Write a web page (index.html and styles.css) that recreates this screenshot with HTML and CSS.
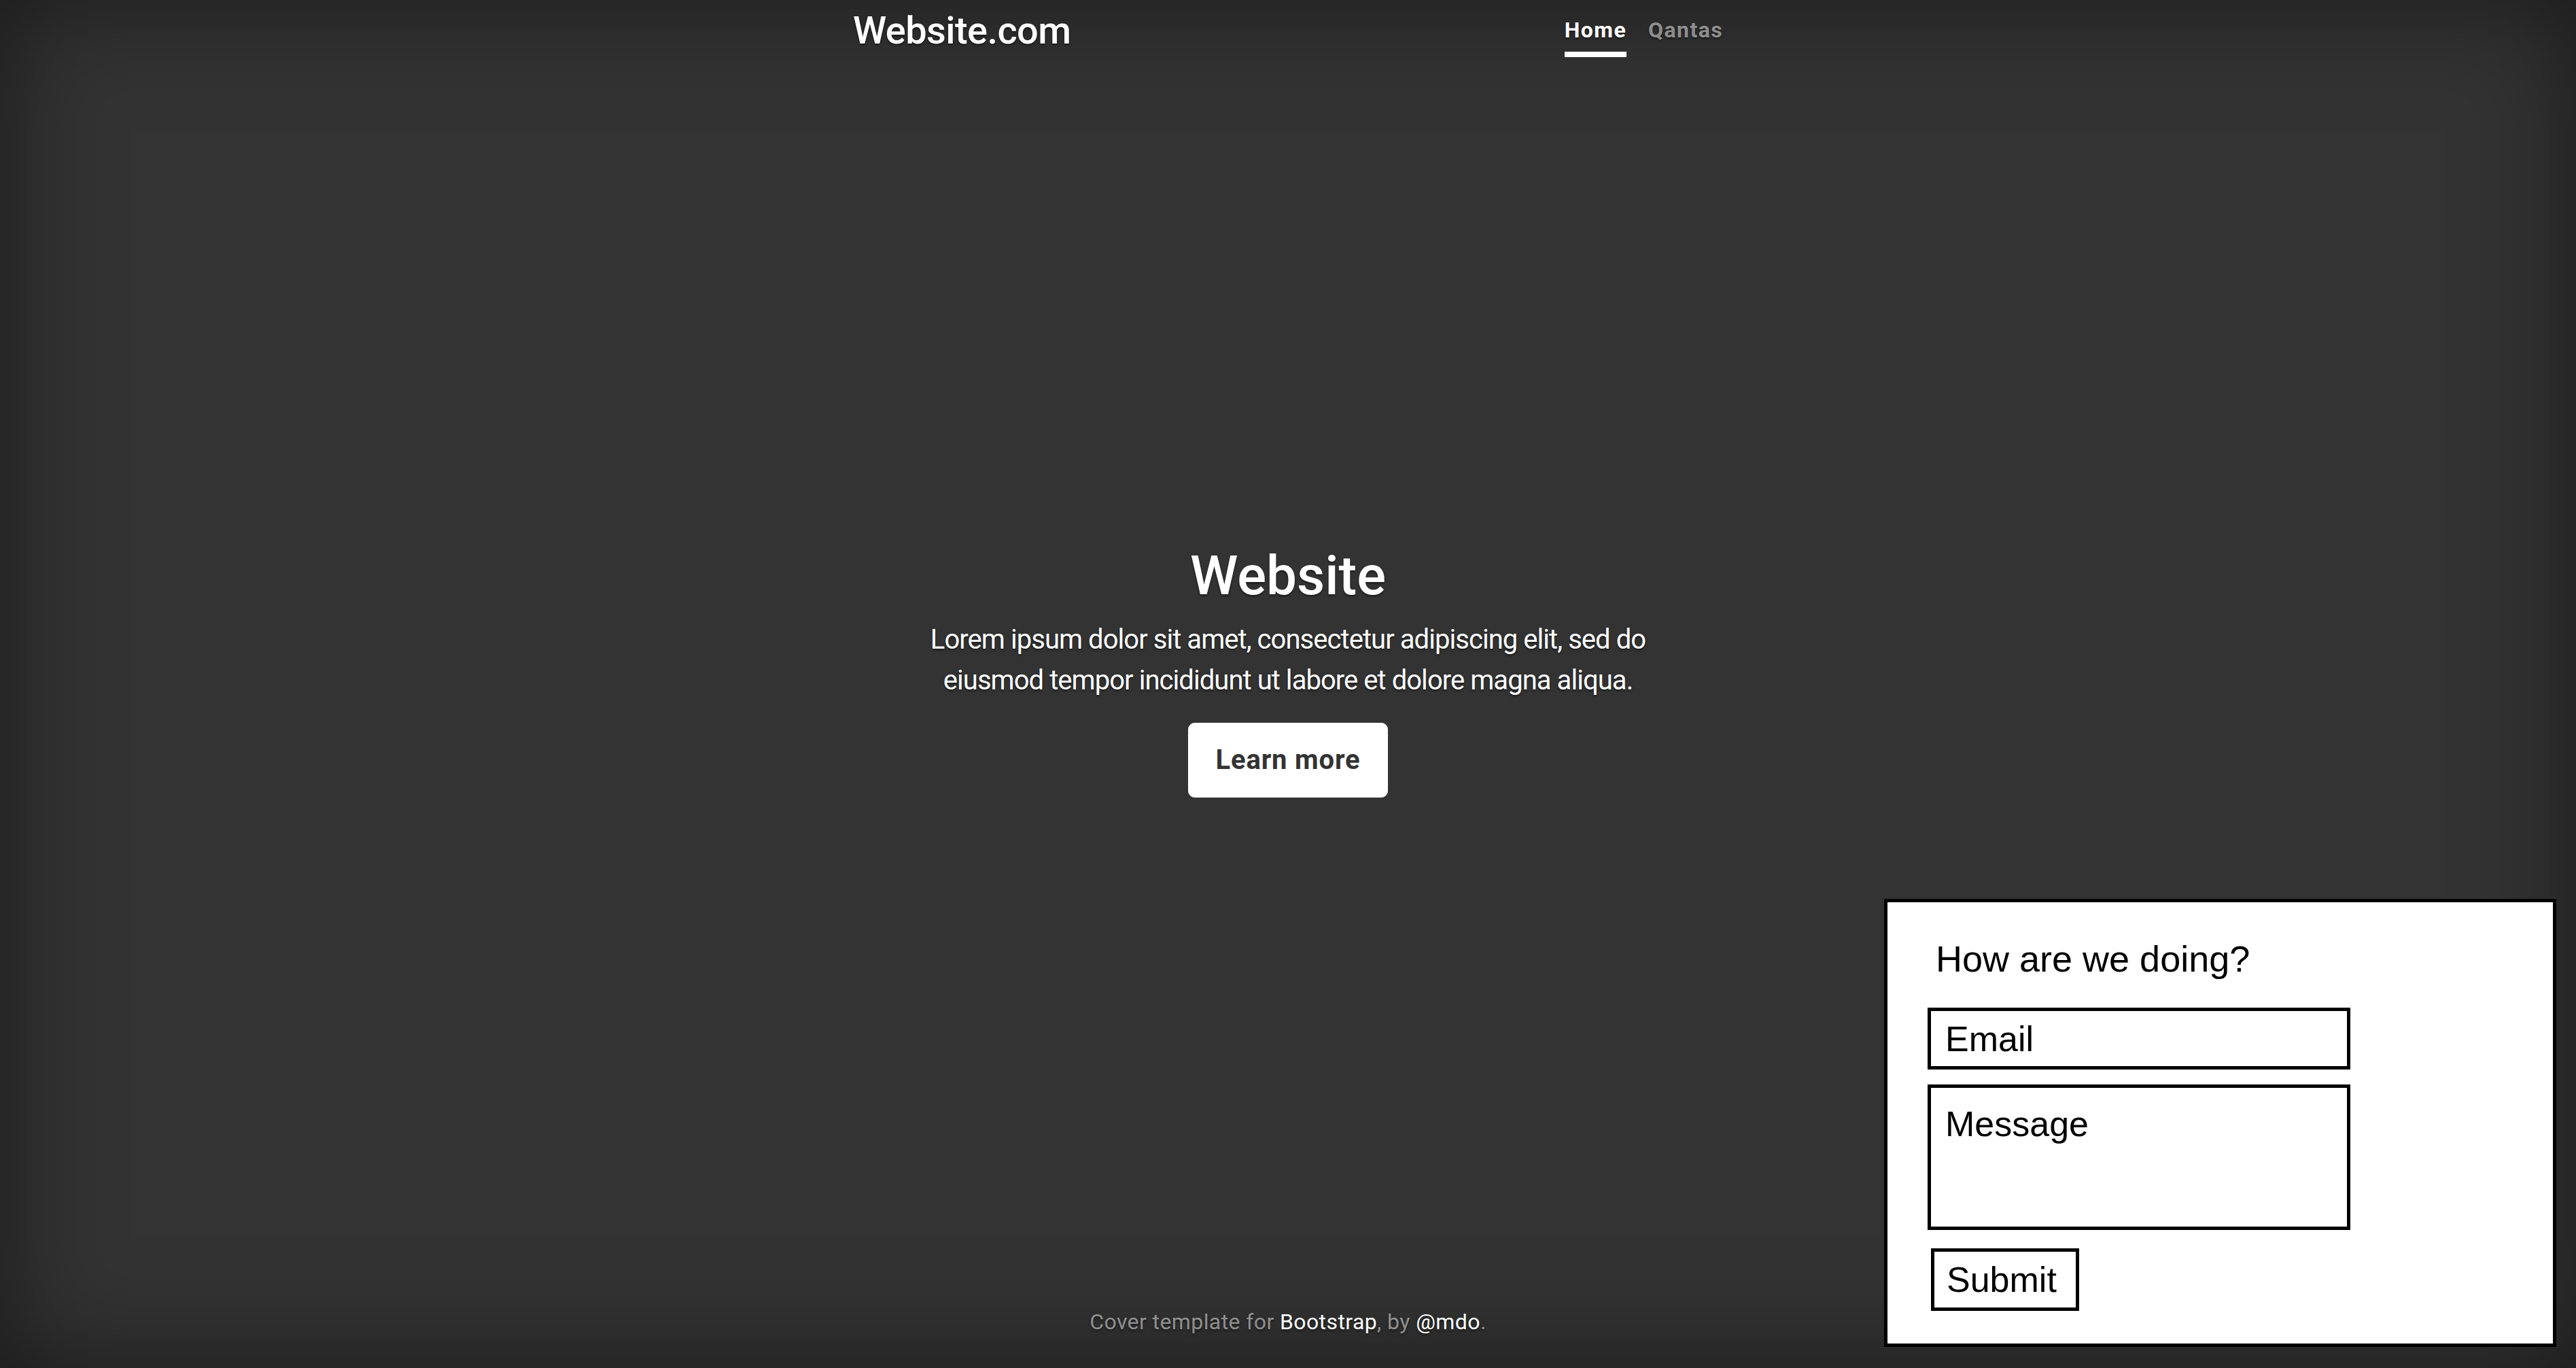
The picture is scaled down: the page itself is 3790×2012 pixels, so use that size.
FILE: index.html
```html
<!DOCTYPE html>
<html lang="en">
<head>
<meta charset="utf-8">
<title>Website</title>
<link rel="stylesheet" href="styles.css">
</head>
<body>
<div class="cover-container">
  <header class="masthead">
    <h3 class="masthead-brand">Website.com</h3>
    <nav class="nav-masthead">
      <a class="nav-link active" href="#">Home</a>
      <a class="nav-link" href="#">Qantas</a>
    </nav>
  </header>
  <main class="cover">
    <h1 class="cover-heading">Website</h1>
    <p class="lead">Lorem ipsum dolor sit amet, consectetur adipiscing elit, sed do eiusmod tempor incididunt ut labore et dolore magna aliqua.</p>
    <div class="cover-action"><a href="#" class="btn">Learn more</a></div>
  </main>
  <footer class="mastfoot">
    <p>Cover template for <a href="#">Bootstrap</a>, by <a href="#">@mdo</a>.</p>
  </footer>
</div>
<form class="feedback">
  <h3 class="feedback-title">How are we doing?</h3>
  <input class="feedback-field" type="email" placeholder="Email">
  <textarea class="feedback-field feedback-message" placeholder="Message"></textarea>
  <button class="feedback-submit" type="button">Submit</button>
</form>
</body>
</html>
```
FILE: styles.css
```css
html {
  font-size: 32px;
  height: 100%;
}
body {
  margin: 0;
  height: 100%;
  display: flex;
  background-color: #333;
  color: #fff;
  font-family: Roboto, "Liberation Sans", Arial, sans-serif;
  font-size: 1rem;
  line-height: 1.5;
  text-align: center;
  text-shadow: 0 1.6px 3.2px rgba(0, 0, 0, 0.5);
  box-shadow: inset 0 0 160px rgba(0, 0, 0, 0.5);
}
.cover-container {
  box-sizing: border-box;
  width: 100%;
  max-width: 1344px;
  height: 100%;
  margin: 0 auto;
  padding: 12px 32px;
  display: flex;
  flex-direction: column;
}
.masthead {
  display: flex;
  justify-content: space-between;
  align-items: flex-start;
  margin-bottom: auto;
}
.masthead-brand {
  margin: 0;
  font-size: 56px;
  font-weight: 500;
  line-height: 1.2;
  letter-spacing: -0.6px;
}
.nav-masthead {
  display: flex;
  gap: 32px;
}
.nav-link {
  padding: 8px 0;
  font-weight: 700;
  letter-spacing: 1.4px;
  color: rgba(255, 255, 255, 0.5);
  text-decoration: none;
  border-bottom: 8px solid transparent;
}
.nav-link.active {
  color: #fff;
  border-bottom-color: #fff;
}
.cover {
  padding: 0 48px;
}
.cover-heading {
  margin: 0 0 16px;
  font-size: 80px;
  font-weight: 500;
  line-height: 1.2;
}
.lead {
  margin: 0 0 32px;
  font-size: 40px;
  font-weight: 400;
  line-height: 1.5;
  letter-spacing: -0.95px;
}
.cover-action {
  display: flex;
  justify-content: center;
  margin-bottom: 32px;
}
.btn {
  display: inline-block;
  padding: 24px 40px;
  font-size: 40px;
  line-height: 1.5;
  font-weight: 700;
  letter-spacing: 0.8px;
  color: #333;
  background-color: #fff;
  border: 1.6px solid #fff;
  border-radius: 9.6px;
  text-shadow: none;
  text-decoration: none;
}
.mastfoot {
  margin-top: auto;
  color: rgba(255, 255, 255, 0.5);
}
.mastfoot p {
  margin: 0 0 32px;
  letter-spacing: 0.4px;
}
.mastfoot a {
  color: #fff;
  text-decoration: none;
}
.feedback {
  position: fixed;
  right: 29px;
  bottom: 31px;
  width: 989px;
  box-sizing: border-box;
  padding: 52px 0 48px 59px;
  background: #fff;
  border: 5px solid #000;
  color: #000;
  text-shadow: none;
  text-align: left;
  font-family: "Liberation Sans", Arial, sans-serif;
}
.feedback-title {
  margin: 0 0 41px 12px;
  font-size: 54px;
  font-weight: 400;
  line-height: normal;
}
.feedback-field {
  display: block;
  box-sizing: border-box;
  width: 622px;
  height: 91px;
  margin: 0 0 22px;
  padding: 0 21px;
  border: 5px solid #000;
  border-radius: 0;
  outline: none;
  background: #fff;
  color: #000;
  font-family: "Liberation Sans", Arial, sans-serif;
  font-size: 52px;
}
.feedback-field::placeholder {
  color: #000;
  opacity: 1;
}
.feedback-message {
  height: 214px;
  margin-bottom: 27px;
  padding: 23px 21px;
  line-height: normal;
  resize: none;
}
.feedback-submit {
  display: block;
  box-sizing: border-box;
  width: 218px;
  height: 92px;
  margin: 0 0 0 5px;
  padding: 0 18px;
  border: 5px solid #000;
  border-radius: 0;
  background: #fff;
  color: #000;
  font-family: "Liberation Sans", Arial, sans-serif;
  font-size: 52px;
  text-align: left;
}
```
